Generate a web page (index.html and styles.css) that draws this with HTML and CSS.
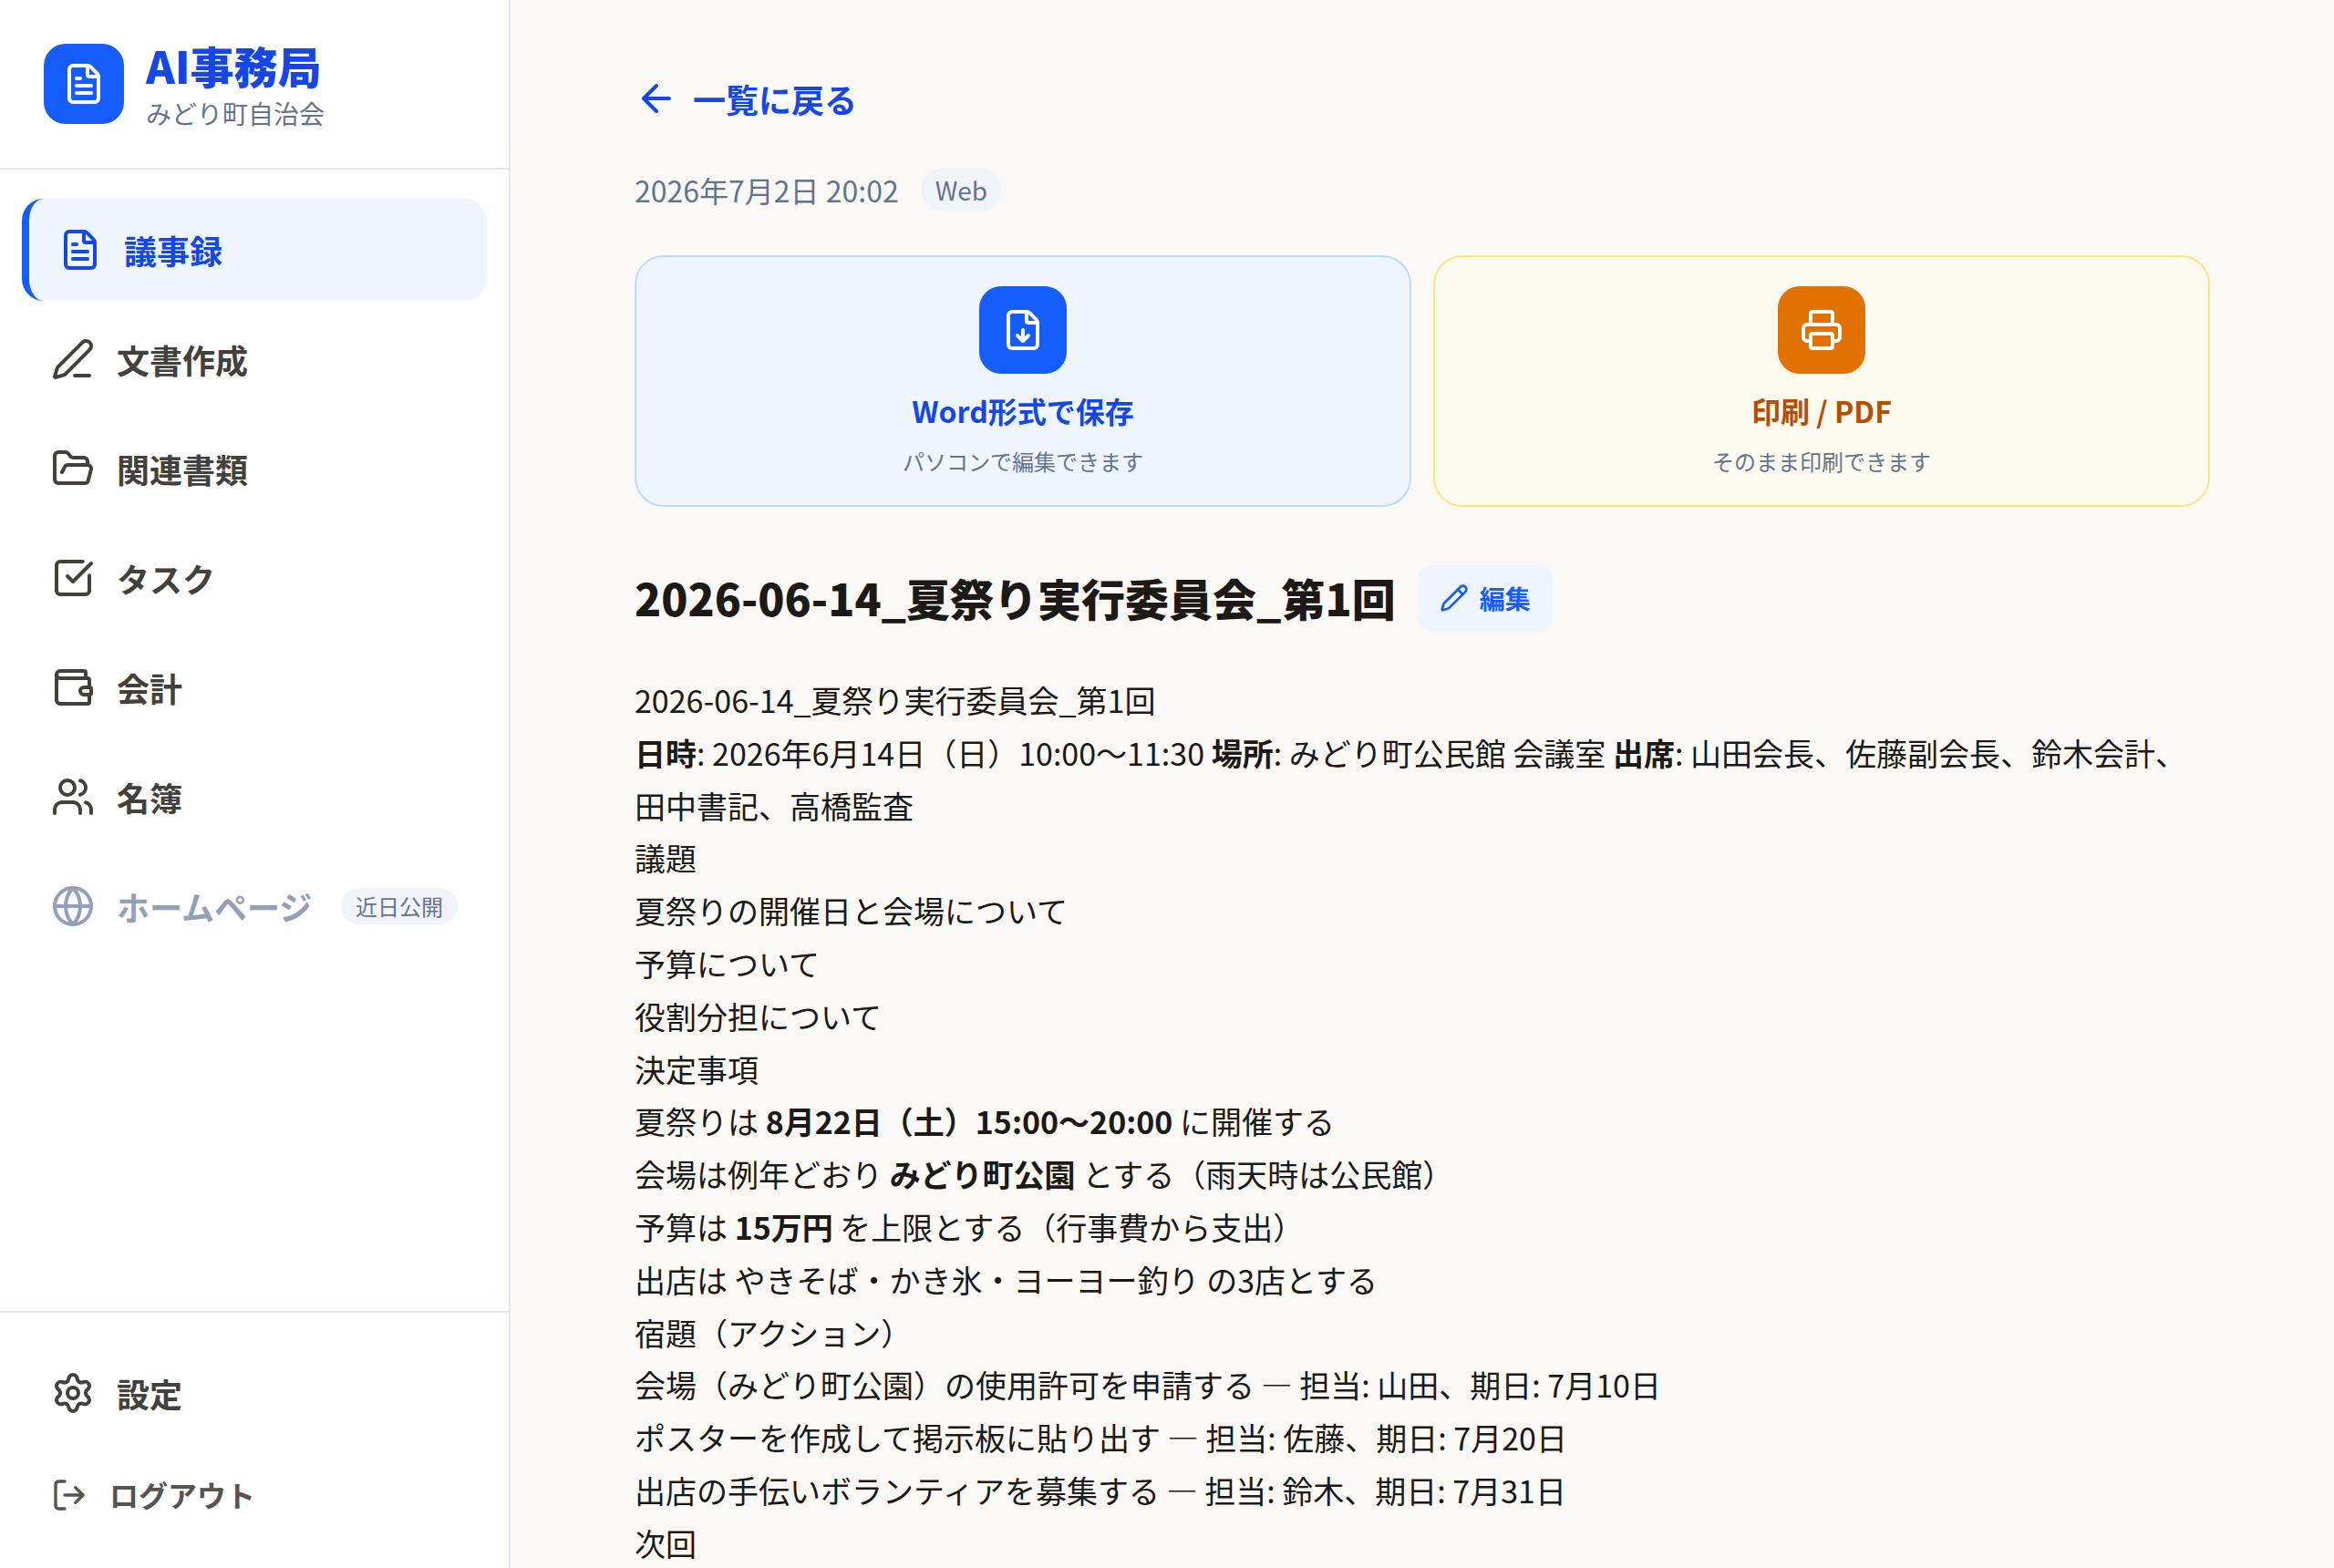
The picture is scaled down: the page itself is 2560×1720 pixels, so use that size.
FILE: index.html
```html
<!DOCTYPE html>
<html lang="ja">
<head>
    <meta charset="UTF-8">
    <meta name="viewport" content="width=device-width, initial-scale=1.0">
    <title>AI事務局 - 議事録</title>
    <link rel="stylesheet" href="styles.css">
</head>
<body>

    <aside class="sidebar">
        <div class="brand">
            <div class="brand-logo">
                <svg class="icon" viewBox="0 0 24 24"><path d="M6 22a2 2 0 0 1-2-2V4a2 2 0 0 1 2-2h8a2.4 2.4 0 0 1 1.704.706l3.588 3.588A2.4 2.4 0 0 1 20 8v12a2 2 0 0 1-2 2z"/><path d="M14 2v5a1 1 0 0 0 1 1h5"/><path d="M10 9H8"/><path d="M16 13H8"/><path d="M16 17H8"/></svg>
            </div>
            <div class="brand-text">
                <div class="brand-name">AI事務局</div>
                <div class="brand-org">みどり町自治会</div>
            </div>
        </div>

        <nav class="nav">
            <a class="nav-item active">
                <svg class="icon" viewBox="0 0 24 24"><path d="M6 22a2 2 0 0 1-2-2V4a2 2 0 0 1 2-2h8a2.4 2.4 0 0 1 1.704.706l3.588 3.588A2.4 2.4 0 0 1 20 8v12a2 2 0 0 1-2 2z"/><path d="M14 2v5a1 1 0 0 0 1 1h5"/><path d="M10 9H8"/><path d="M16 13H8"/><path d="M16 17H8"/></svg>
                <span class="nav-label">議事録</span>
            </a>
            <a class="nav-item">
                <svg class="icon" viewBox="0 0 24 24"><path d="M13 21h8"/><path d="M21.174 6.812a1 1 0 0 0-3.986-3.987L3.842 16.174a2 2 0 0 0-.5.83l-1.321 4.352a.5.5 0 0 0 .623.622l4.353-1.32a2 2 0 0 0 .83-.497z"/></svg>
                <span class="nav-label">文書作成</span>
            </a>
            <a class="nav-item">
                <svg class="icon" viewBox="0 0 24 24"><path d="m6 14 1.5-2.9A2 2 0 0 1 9.24 10H20a2 2 0 0 1 1.94 2.5l-1.54 6a2 2 0 0 1-1.95 1.5H4a2 2 0 0 1-2-2V5a2 2 0 0 1 2-2h3.9a2 2 0 0 1 1.69.9l.81 1.2a2 2 0 0 0 1.67.9H18a2 2 0 0 1 2 2v2"/></svg>
                <span class="nav-label">関連書類</span>
            </a>
            <a class="nav-item">
                <svg class="icon" viewBox="0 0 24 24"><path d="M21 10.656V19a2 2 0 0 1-2 2H5a2 2 0 0 1-2-2V5a2 2 0 0 1 2-2h12.344"/><path d="m9 11 3 3L22 4"/></svg>
                <span class="nav-label">タスク</span>
            </a>
            <a class="nav-item">
                <svg class="icon" viewBox="0 0 24 24"><path d="M19 7V4a1 1 0 0 0-1-1H5a2 2 0 0 0 0 4h15a1 1 0 0 1 1 1v4h-3a2 2 0 0 0 0 4h3a1 1 0 0 0 1-1v-2a1 1 0 0 0-1-1"/><path d="M3 5v14a2 2 0 0 0 2 2h15a1 1 0 0 0 1-1v-4"/></svg>
                <span class="nav-label">会計</span>
            </a>
            <a class="nav-item">
                <svg class="icon" viewBox="0 0 24 24"><path d="M16 21v-2a4 4 0 0 0-4-4H6a4 4 0 0 0-4 4v2"/><circle cx="9" cy="7" r="4"/><path d="M22 21v-2a4 4 0 0 0-3-3.87"/><path d="M16 3.128a4 4 0 0 1 0 7.744"/></svg>
                <span class="nav-label">名簿</span>
            </a>
            <a class="nav-item disabled">
                <svg class="icon" viewBox="0 0 24 24"><circle cx="12" cy="12" r="10"/><path d="M12 2a14.5 14.5 0 0 0 0 20 14.5 14.5 0 0 0 0-20"/><path d="M2 12h20"/></svg>
                <span class="nav-label">ホームページ</span>
                <span class="soon">近日公開</span>
            </a>
        </nav>

        <div class="sidebar-footer">
            <a class="nav-item">
                <svg class="icon" viewBox="0 0 24 24"><path d="M9.671 4.136a2.34 2.34 0 0 1 4.659 0 2.34 2.34 0 0 0 3.319 1.915 2.34 2.34 0 0 1 2.33 4.033 2.34 2.34 0 0 0 0 3.831 2.34 2.34 0 0 1-2.33 4.033 2.34 2.34 0 0 0-3.319 1.915 2.34 2.34 0 0 1-4.659 0 2.34 2.34 0 0 0-3.32-1.915 2.34 2.34 0 0 1-2.33-4.033 2.34 2.34 0 0 0 0-3.831A2.34 2.34 0 0 1 6.35 6.051a2.34 2.34 0 0 0 3.319-1.915"/><circle cx="12" cy="12" r="3"/></svg>
                <span class="nav-label">設定</span>
            </a>
            <a class="nav-item logout">
                <svg class="icon" viewBox="0 0 24 24"><path d="m16 17 5-5-5-5"/><path d="M21 12H9"/><path d="M9 21H5a2 2 0 0 1-2-2V5a2 2 0 0 1 2-2h4"/></svg>
                <span class="logout-label">ログアウト</span>
            </a>
        </div>
    </aside>

    <main class="main">
        <div class="content">
            <a class="back-link">
                <svg class="icon" viewBox="0 0 24 24"><path d="m12 19-7-7 7-7"/><path d="M19 12H5"/></svg>
                <span class="nav-label">一覧に戻る</span>
            </a>

            <div class="meta">
                <span>2026年7月2日 20:02</span>
                <span class="source">Web</span>
            </div>

            <div class="actions">
                <div class="action word">
                    <div class="action-icon">
                        <svg class="icon" viewBox="0 0 24 24"><path d="M6 22a2 2 0 0 1-2-2V4a2 2 0 0 1 2-2h8a2.4 2.4 0 0 1 1.704.706l3.588 3.588A2.4 2.4 0 0 1 20 8v12a2 2 0 0 1-2 2z"/><path d="M14 2v5a1 1 0 0 0 1 1h5"/><path d="M12 18v-6"/><path d="m9 15 3 3 3-3"/></svg>
                    </div>
                    <div class="action-title">Word形式で保存</div>
                    <div class="action-note">パソコンで編集できます</div>
                </div>
                <div class="action print">
                    <div class="action-icon">
                        <svg class="icon" viewBox="0 0 24 24"><path d="M6 18H4a2 2 0 0 1-2-2v-5a2 2 0 0 1 2-2h16a2 2 0 0 1 2 2v5a2 2 0 0 1-2 2h-2"/><path d="M6 9V3a1 1 0 0 1 1-1h10a1 1 0 0 1 1 1v6"/><rect x="6" y="14" width="12" height="8" rx="1"/></svg>
                    </div>
                    <div class="action-title">印刷 / PDF</div>
                    <div class="action-note">そのまま印刷できます</div>
                </div>
            </div>

            <div class="title-row">
                <h1>2026-06-14_夏祭り実行委員会_第1回</h1>
                <button class="edit-button">
                    <svg class="icon" viewBox="0 0 24 24"><path d="M21.174 6.812a1 1 0 0 0-3.986-3.987L3.842 16.174a2 2 0 0 0-.5.83l-1.321 4.352a.5.5 0 0 0 .623.622l4.353-1.32a2 2 0 0 0 .83-.497z"/><path d="m15 5 4 4"/></svg>
                    <span>編集</span>
                </button>
            </div>

            <div class="minutes">
                <p>2026-06-14_夏祭り実行委員会_第1回</p>
                <p><strong>日時</strong>: 2026年6月14日（日）10:00〜11:30 <strong>場所</strong>: みどり町公民館 会議室 <strong>出席</strong>: 山田会長、佐藤副会長、鈴木会計、田中書記、高橋監査</p>
                <p>議題</p>
                <p>夏祭りの開催日と会場について</p>
                <p>予算について</p>
                <p>役割分担について</p>
                <p>決定事項</p>
                <p>夏祭りは <strong>8月22日（土）15:00〜20:00</strong> に開催する</p>
                <p>会場は例年どおり <strong>みどり町公園</strong> とする（雨天時は公民館）</p>
                <p>予算は <strong>15万円</strong> を上限とする（行事費から支出）</p>
                <p>出店は やきそば・かき氷・ヨーヨー釣り の3店とする</p>
                <p>宿題（アクション）</p>
                <p>会場（みどり町公園）の使用許可を申請する — 担当: 山田、期日: 7月10日</p>
                <p>ポスターを作成して掲示板に貼り出す — 担当: 佐藤、期日: 7月20日</p>
                <p>出店の手伝いボランティアを募集する — 担当: 鈴木、期日: 7月31日</p>
                <p>次回</p>
            </div>
        </div>
    </main>

</body>
</html>
```
FILE: styles.css
```css
* {
    box-sizing: border-box;
}

body {
    display: flex;
    height: 100vh;
    margin: 0;
    overflow: hidden;
    font-family: "Noto Sans CJK JP", sans-serif;
    font-size: 34px;
    line-height: 1.7;
    color: #1c1917;
    background-color: #faf9f5;
}

h1, p {
    margin: 0;
}

.icon {
    flex-shrink: 0;
    width: 48px;
    height: 48px;
    fill: none;
    stroke: currentColor;
    stroke-width: 2;
    stroke-linecap: round;
    stroke-linejoin: round;
}

/* Sidebar */
.sidebar {
    display: flex;
    flex-direction: column;
    flex-shrink: 0;
    width: 560px;
    background-color: #fff;
    border-right: 2px solid #e2e8f0;
}

.brand {
    display: flex;
    align-items: center;
    gap: 24px;
    height: 186px;
    padding: 0 48px;
    border-bottom: 2px solid #e2e8f0;
}

.brand-logo {
    display: flex;
    align-items: center;
    justify-content: center;
    width: 88px;
    height: 88px;
    border-radius: 24px;
    color: #fff;
    background-color: #155dfc;
}

.brand-text {
    padding-top: 2px;
}

.brand-name {
    font-size: 48px;
    font-weight: 800;
    line-height: 60px;
    color: #1447e6;
}

.brand-org {
    margin-top: 2px;
    font-size: 28px;
    line-height: 42px;
    color: #62748e;
}

.nav {
    display: flex;
    flex: 1;
    flex-direction: column;
    gap: 8px;
    padding: 32px 24px;
}

.nav-item {
    display: flex;
    align-items: center;
    gap: 24px;
    height: 112px;
    padding: 0 32px;
    border-radius: 24px;
    font-size: 36px;
    font-weight: 700;
    white-space: nowrap;
    color: #44403b;
}

.nav-label {
    padding-top: 2px;
}

.nav-item.active {
    border-left: 8px solid #155dfc;
    color: #1447e6;
    background-color: #eff6ff;
}

.nav-item.disabled {
    color: #90a1b9;
}

.soon {
    margin-left: auto;
    padding: 4px 16px;
    border-radius: 20px;
    font-size: 24px;
    font-weight: 400;
    line-height: 32px;
    color: #62748e;
    background-color: #f1f5f9;
}

.sidebar-footer {
    display: flex;
    flex-direction: column;
    gap: 8px;
    padding: 32px 24px;
    border-top: 2px solid #e2e8f0;
}

.logout {
    height: 96px;
    font-size: 32px;
    color: #57534d;
}

.logout .icon {
    width: 40px;
    height: 40px;
}

.logout-label {
    padding-bottom: 2px;
}

/* Main */
.main {
    flex: 1;
    padding-top: 64px;
}

.content {
    width: 1728px;
    margin: 0 auto;
}

.back-link {
    display: flex;
    align-items: center;
    gap: 16px;
    height: 88px;
    font-size: 36px;
    font-weight: 700;
    color: #1447e6;
}

.meta {
    display: flex;
    align-items: center;
    gap: 24px;
    height: 48px;
    margin-top: 32px;
    font-size: 32px;
    color: #62748e;
}

.source {
    padding: 4px 16px;
    border-radius: 24px;
    font-size: 28px;
    line-height: 40px;
    background-color: #f1f5f9;
}

.actions {
    display: grid;
    grid-template-columns: 1fr 1fr;
    gap: 24px;
    margin-top: 48px;
}

.action {
    display: flex;
    flex-direction: column;
    align-items: center;
    gap: 16px;
    padding: 32px;
    border: 2px solid;
    border-radius: 32px;
}

.action-icon {
    display: flex;
    align-items: center;
    justify-content: center;
    width: 96px;
    height: 96px;
    border-radius: 24px;
    color: #fff;
}

.action-title {
    font-size: 32px;
    font-weight: 700;
    line-height: 48px;
}

.action-note {
    font-size: 24px;
    line-height: 32px;
    color: #62748e;
}

.word {
    border-color: #bedbff;
    background-color: #eff6ff;
}

.word .action-icon {
    background-color: #155dfc;
}

.word .action-title {
    color: #1447e6;
}

.print {
    border-color: #fee685;
    background-color: #fdfbef;
}

.print .action-icon {
    background-color: #e17100;
}

.print .action-title {
    color: #bb4d00;
}

.title-row {
    display: flex;
    align-items: center;
    gap: 24px;
    margin-top: 64px;
}

.title-row h1 {
    padding-bottom: 2px;
    font-size: 48px;
    font-weight: 800;
    line-height: 68px;
}

.edit-button {
    display: flex;
    align-items: center;
    gap: 12px;
    height: 72px;
    padding: 0 24px;
    border: none;
    border-radius: 16px;
    font-family: inherit;
    font-size: 28px;
    font-weight: 700;
    color: #155dfc;
    background-color: #eff6ff;
}

.edit-button .icon {
    width: 32px;
    height: 32px;
}

.minutes {
    margin-top: 47px;
}
```
